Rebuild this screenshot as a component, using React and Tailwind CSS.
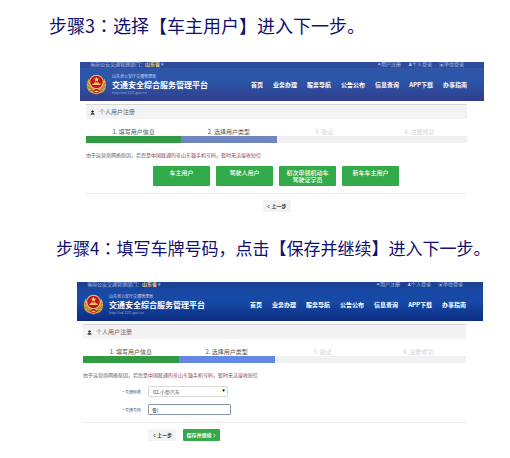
import { ChevronLeft, ChevronRight, User } from "lucide-react";

const NAV = ["首页", "业务办理", "服务导航", "公告公布", "信息查询", "APP下载", "办事指南"];
const STEPS = ["1. 填写用户信息", "2. 选择用户类型", "3. 验证", "4. 注册成功"];
const USER_TYPES = [["车主用户"], ["驾驶人用户"], ["初次申领机动车", "驾驶证学员"], ["新车车主用户"]];

function Emblem() {
  return (
    <svg viewBox="0 0 42 42" className="size-[21px] shrink-0" aria-hidden="true">
      <path d="M6 9C0 17 0 30 8 36c4 3 8 2 13 5 5-3 9-2 13-5 8-6 8-19 2-27l-4 17-11 7-11-7z" fill="#dfa444" />
      <path d="M3 18l8 8M3 25l10 6M8 33l10 1M39 18l-8 8M39 25l-10 6M34 33l-10 1" stroke="#8d5a24" strokeWidth="1.5" />
      <circle cx="21" cy="16" r="14.5" fill="#f0c46c" />
      <circle cx="21" cy="16" r="12.5" fill="#c3161c" />
      <path d="M21 6l1.5 3.2 3.5.4-2.600 2.300.7 3.400-3.100-1.700-3.100 1.700.7-3.400L16 9.600l3.500-.4z" fill="#ffe27a" />
      <path d="M13 22v-3h3v-2h10v2h3v3z" fill="#f5c35c" />
      <path d="M13 35l8-5 8 5-8 4z" fill="#c3161c" />
      <path d="M16 35l5-2 5 2-5 2z" fill="#f3d27e" />
    </svg>
  );
}

function Header({ tone }) {
  return (
    <header className={`overflow-hidden text-white ${tone}`}>
      <div className="flex h-[6px] items-center justify-between bg-[#1d2f70]/25 pl-[10px] pr-[20px] text-[5px] leading-[6px] text-[#b4c2e2]">
        <span className="-mt-[3px]">
          当前公安交通管理部门：<b className="text-[#e8cf86]">山东省</b> ▾
        </span>
        <div className="-mt-[3px] flex gap-[7px]">
          <a href="#register">✦用户注册</a>
          <a href="#personal">♟个人登录</a>
          <a href="#company">▣单位登录</a>
        </div>
      </div>
      <div className="flex h-[33px] items-center justify-between pl-[6px] pr-[17px]">
        <div className="flex items-center gap-[5px]">
          <Emblem />
          <div className="whitespace-nowrap">
            <p className="text-[4px] leading-[5px] text-[#d5def2]">山东省公安厅交通管理局</p>
            <h2 className="text-[8px] font-bold leading-[11px]">交通安全综合服务管理平台</h2>
            <p className="font-['Liberation_Sans',sans-serif] text-[4px] leading-[5px] text-[#8fa3d3]">http://sd.122.gov.cn</p>
          </div>
        </div>
        <nav className="flex gap-[10px] whitespace-nowrap text-[6px] font-bold leading-[8px]">
          {NAV.map((item) => (
            <a key={item} href="#nav">{item}</a>
          ))}
        </nav>
      </div>
    </header>
  );
}

function Registration({ tone, activeTone, children }) {
  return (
    <div className="bg-white">
      <Header tone={tone} />
      <div className="pl-[6px] pr-[17px] pt-[3px]">
        <div className="flex h-[15px] items-center gap-[4px] border-t border-[#d8d4d8] bg-[#f3f2f5] pl-[4px] text-[6px] leading-[8px] text-[#666]">
          <User className="size-[5px] fill-[#222] text-[#222]" strokeWidth={3} />
          个人用户注册
        </div>
        <ol className="grid grid-cols-4 pt-[8px] text-center text-[6px] leading-[9px]">
          {STEPS.map((step, i) => (
            <li key={step} className={i < 2 ? "text-[#555]" : "text-[#d3d3d8]"}>
              {step}
              <div className={`h-[7px] ${i === 0 ? "bg-[#309b43]" : i === 1 ? activeTone : "bg-[#f1f0f3]"}`} />
            </li>
          ))}
        </ol>
        <p className="whitespace-nowrap pt-[8px] text-[5px] leading-[8px] text-[#666]">
          由于运营商网络原因，若您是<span className="text-[#8f4257]">中国联通的非山东籍手机号码，暂时无法接收短信</span>
        </p>
        {children}
      </div>
    </div>
  );
}

function StepTitle({ step, className, children }) {
  return (
    <h1 className={`whitespace-nowrap leading-[26px] text-[#10106f] ${className}`}>
      {step}
      <span className="font-['Noto_Sans_CJK_TC',sans-serif]" lang="zh-TW">：</span>
      {children}
    </h1>
  );
}

function BackButton() {
  return (
    <button type="button" className="flex h-[12px] w-[28px] items-center justify-center rounded-[1px] bg-[#f3f3f3] text-[5px] font-bold leading-[8px] text-[#333]">
      <ChevronLeft className="size-[5px]" strokeWidth={4} />
      上一步
    </button>
  );
}

export default function App() {
  return (
    <main className="min-h-screen bg-white pb-[16px] font-['Noto_Sans_CJK_SC','Liberation_Sans',sans-serif]">
      <section>
        <StepTitle step="步骤3" className="pb-[24px] pl-[49px] pt-[12px] text-[18px]">
          选择【车主用户】进入下一步。
        </StepTitle>
        <div className="pl-[80px] pr-[26px]">
          <Registration tone="bg-linear-to-b from-[#3156a8] via-[#2b55a8] to-[#303d8c]" activeTone="bg-[#7086c0]">
            <div className="mt-[7px] flex gap-[6px] border-b border-[#ececec] pb-[7px] pl-[67px]">
              {USER_TYPES.map((lines) => (
                <button key={lines[0]} type="button" className="flex h-[20px] w-[57px] flex-col items-center rounded-[1px] bg-[#33aa49] pt-[3px] text-[6px] font-medium leading-[7px] text-white">
                  {lines.map((line) => (
                    <span key={line}>{line}</span>
                  ))}
                </button>
              ))}
            </div>
            <div className="flex justify-center pt-[6px]">
              <BackButton />
            </div>
          </Registration>
        </div>
      </section>

      <section>
        <StepTitle step="步骤4" className="pb-[21px] pl-[56px] pt-[23px] text-[17px]">
          填写车牌号码，点击【保存并继续】进入下一步。
        </StepTitle>
        <div className="pl-[77px] pr-[27px]">
          <Registration tone="bg-linear-to-b from-[#1b47a0] via-[#164aa8] to-[#0b2c80]" activeTone="bg-[#6488e6]">
            <form onSubmit={(e) => e.preventDefault()}>
              <div className="mt-[7px] flex flex-col gap-[7px] border-b border-[#ececec] pb-[7px] text-[5px] leading-[8px] text-[#555]">
                <div className="flex items-center gap-[7px]">
                  <label htmlFor="plate-type" className="w-[58px] text-right text-[4px]">* 号牌种类</label>
                  <div className="relative">
                    <select id="plate-type" className="block h-[11px] w-[80px] appearance-none rounded-[2px] border border-[#d8d8d8] bg-white pl-[4px] text-[5px] leading-[8px]">
                      <option>02.小型汽车</option>
                    </select>
                    <span className="pointer-events-none absolute right-[3px] top-[1px] text-[3px] text-black">▼</span>
                  </div>
                </div>
                <div className="flex items-center gap-[7px]">
                  <label htmlFor="plate-number" className="w-[58px] text-right text-[4px]">* 号牌号码</label>
                  <input id="plate-number" defaultValue="鲁|" className="h-[11px] w-[83px] rounded-[1px] border border-[#8795a8] bg-white pl-[3px] text-[5px] leading-[8px] text-[#333]" />
                </div>
              </div>
              <div className="flex gap-[7px] pl-[65px] pt-[6px]">
                <BackButton />
                <button type="submit" className="flex h-[12px] w-[37px] items-center justify-center rounded-[1px] bg-[#33aa49] text-[5px] font-bold leading-[8px] text-white">
                  保存并继续
                  <ChevronRight className="size-[5px]" strokeWidth={4} />
                </button>
              </div>
            </form>
          </Registration>
        </div>
      </section>
    </main>
  );
}
